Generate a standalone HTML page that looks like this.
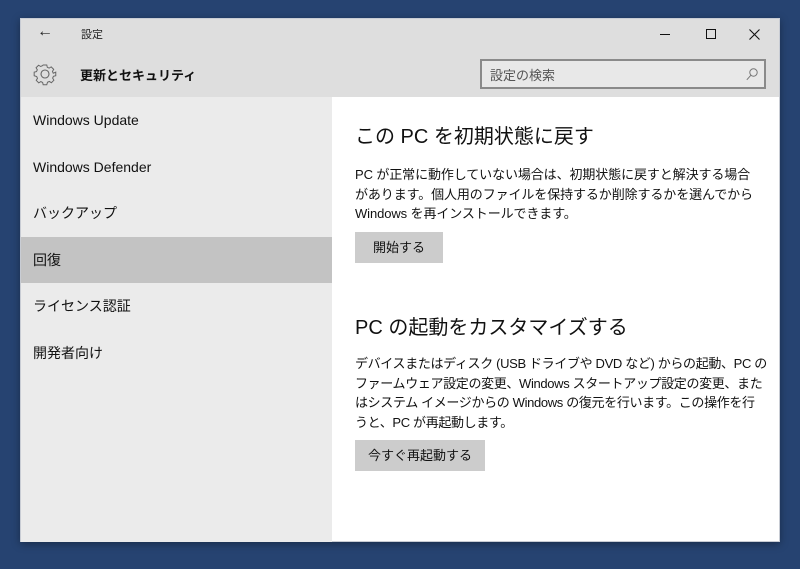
<!DOCTYPE html>
<html><head><meta charset="utf-8"><style>
*{margin:0;padding:0;box-sizing:border-box}
body{width:800px;height:569px;background:#264371;position:relative;overflow:hidden;font-family:"Liberation Sans","Noto Sans CJK JP",sans-serif;color:#000}
.win{position:absolute;left:20px;top:18px;width:760px;height:524px;background:#fff;border:1px solid #c8ccd4;box-shadow:0 2px 8px rgba(0,0,0,.35)}
.title{position:absolute;left:0;top:0;width:758px;height:78px;background:#dedede}
.side{position:absolute;left:0;top:78px;width:311px;height:445px;background:#ebebeb}
.t{position:absolute;white-space:nowrap}
.item{position:absolute;left:0;width:311px;height:46px;font-size:14px;padding-left:12px;line-height:46px;color:#111}
.sel{background:#c3c3c3}
.search{position:absolute;left:459px;top:40px;width:286px;height:30px;border:2px solid #8a8a8a;background:#e8e8e8}
h2{position:absolute;font-weight:normal;font-size:20px;color:#111;white-space:nowrap}
p{position:absolute;font-size:13px;line-height:19.5px;color:#111;white-space:nowrap;letter-spacing:-0.1px}
.btn{position:absolute;background:#cccccc;font-size:13px;text-align:center;line-height:31px;height:31px;color:#111}
</style></head><body>
<div class="win">
 <div class="title">
  <div class="t" style="left:16px;top:4px;font-size:16px;color:#222">←</div>
  <div class="t" style="left:60px;top:7px;font-size:11px;color:#222">設定</div>
  <div style="position:absolute;left:639px;top:15px;width:10px;height:1px;background:#111"></div>
  <div style="position:absolute;left:685px;top:10px;width:10px;height:10px;border:1px solid #111"></div>
  <svg style="position:absolute;left:728px;top:10px" width="11" height="11" viewBox="0 0 11 11" stroke="#111" stroke-width="1.1"><path d="M0.5 0.5L10.5 10.5M10.5 0.5L0.5 10.5"/></svg>
  <svg style="position:absolute;left:12px;top:43px" width="24" height="24" viewBox="0 0 24 24" fill="none" stroke="#666" stroke-width="1.1"><path d="M10 2h4l.6 2.6 2 .9 2.3-1.4 2.8 2.8-1.4 2.3.9 2L24 10v4l-2.6.6-.9 2 1.4 2.3-2.8 2.8-2.3-1.4-2 .9L14 24h-4l-.6-2.6-2-.9-2.3 1.4-2.8-2.8 1.4-2.3-.9-2L0 14v-4l2.6-.6.9-2-1.4-2.3 2.8-2.8 2.3 1.4 2-.9z" transform="scale(.9) translate(1.3 1.3)"/><circle cx="12" cy="12" r="4"/></svg>
  <div class="t" style="left:59px;top:46px;font-size:13px;font-weight:bold;color:#111">更新とセキュリティ</div>
  <div class="search"><div class="t" style="left:8px;top:4px;font-size:13px;color:#555">設定の検索</div>
   <svg style="position:absolute;left:264px;top:7px" width="12" height="13" viewBox="0 0 12 13" fill="none" stroke="#777" stroke-width="1"><circle cx="7.5" cy="4.5" r="3.7"/><path d="M4.8 7.3L0.8 11.8"/></svg></div>
 </div>
 <div class="side">
  <div class="item" style="top:0">Windows Update</div>
  <div class="item" style="top:47px">Windows Defender</div>
  <div class="item" style="top:93px">バックアップ</div>
  <div class="item sel" style="top:140px">回復</div>
  <div class="item" style="top:186px">ライセンス認証</div>
  <div class="item" style="top:233px">開発者向け</div>
 </div>
 <h2 style="left:334px;top:101px">この PC を初期状態に戻す</h2>
 <p style="left:334px;top:146px">PC が正常に動作していない場合は、初期状態に戻すと解決する場合<br>があります。個人用のファイルを保持するか削除するかを選んでから<br>Windows を再インストールできます。</p>
 <div class="btn" style="left:334px;top:213px;width:88px">開始する</div>
 <h2 style="left:334px;top:292px">PC の起動をカスタマイズする</h2>
 <p style="left:334px;top:335px;letter-spacing:-0.35px">デバイスまたはディスク (USB ドライブや DVD など) からの起動、PC の<br>ファームウェア設定の変更、Windows スタートアップ設定の変更、また<br>はシステム イメージからの Windows の復元を行います。この操作を行<br>うと、PC が再起動します。</p>
 <div class="btn" style="left:334px;top:421px;width:130px">今すぐ再起動する</div>
</div>
</body></html>
